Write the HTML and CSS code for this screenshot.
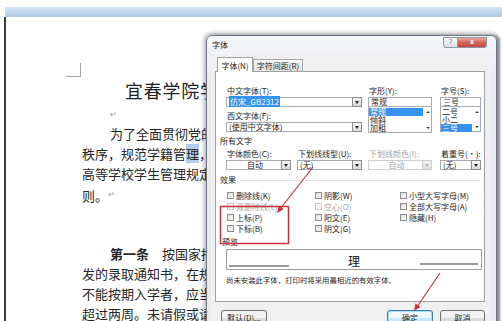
FILE: index.html
```html
<!DOCTYPE html>
<html lang="zh-CN">
<head>
    <meta charset="UTF-8">
    <meta name="viewport" content="width=device-width, initial-scale=1.0">
    <title>字体</title>
    <link rel="stylesheet" href="styles.css">
</head>
<body>

<div class="word">
    <div class="ribbon"></div>
    <div class="page">
        <div class="corner"></div>
        <div class="doc-title">宜春学院学生学籍管理规定</div>
        <div class="line indent"><span class="ret">↵</span></div>
        <div class="line indent">为了全面贯彻党的教育方针，维护正常的教育教学</div>
        <div class="line">秩序，规范学籍管<span class="sel">理</span>，根据教育部《普通</div>
        <div class="line">高等学校学生管理规定》，结合我校实际，制定本细</div>
        <div class="line">则。<span class="ret">↵</span></div>
        <div class="line"></div>
        <div class="line"></div>
        <div class="line indent"><b>第一条</b>　按国家招生规定录取的新生，持学校</div>
        <div class="line">发的录取通知书，在规定期限内到校办理入学手续。</div>
        <div class="line">不能按期入学者，应当向学校请假。请假时间一般不得</div>
        <div class="line">超过两周。未请假或请假逾期者，除因不可抗力等正当</div>
    </div>
</div>

<div class="dialog">
    <div class="titlebar">
        <span class="title">字体</span>
        <div class="caption-btns">
            <span class="cap-help">?</span>
            <span class="cap-close">x</span>
        </div>
    </div>

    <div class="client">
        <div class="tabs">
            <span class="tab active">字体(N)</span>
            <span class="tab">字符间距(R)</span>
        </div>

        <div class="tabpage">
            <div class="font-row">
                <div class="col-a">
                    <div class="lbl">中文字体(T):</div>
                    <div class="combo"><span class="val"><span class="hl">仿宋_GB2312</span></span><span class="drop"></span></div>
                    <div class="lbl gap">西文字体(F):</div>
                    <div class="combo"><span class="val">(使用中文字体)</span><span class="drop"></span></div>
                </div>
                <div class="col-b">
                    <div class="lbl">字形(Y):</div>
                    <div class="edit">常规</div>
                    <div class="listbox">
                        <div class="items">
                            <div class="item on">常规</div>
                            <div class="item">倾斜</div>
                            <div class="item">加粗</div>
                        </div>
                        <div class="sbar"><span class="up"></span><span class="down"></span></div>
                    </div>
                </div>
                <div class="col-c">
                    <div class="lbl">字号(S):</div>
                    <div class="edit">三号</div>
                    <div class="listbox short">
                        <div class="items">
                            <div class="item">二号</div>
                            <div class="item">小二</div>
                            <div class="item on">三号</div>
                        </div>
                        <div class="sbar"><span class="up"></span><span class="down"></span></div>
                    </div>
                </div>
            </div>

            <div class="group">所有文字</div>
            <div class="attr-row">
                <div class="attr">
                    <div class="lbl">字体颜色(C):</div>
                    <div class="combo center"><span class="val">自动</span><span class="drop"></span></div>
                </div>
                <div class="attr">
                    <div class="lbl">下划线线型(U):</div>
                    <div class="combo"><span class="val">(无)</span><span class="drop"></span></div>
                </div>
                <div class="attr c3 disabled">
                    <div class="lbl">下划线颜色(I):</div>
                    <div class="combo center"><span class="val">自动</span><span class="drop"></span></div>
                </div>
                <div class="attr c4">
                    <div class="lbl">着重号(·):</div>
                    <div class="combo"><span class="val">(无)</span><span class="drop"></span></div>
                </div>
            </div>

            <div class="group rule">效果</div>
            <div class="effects">
                <div class="chk"><span class="box"></span>删除线(K)</div>
                <div class="chk disabled"><span class="box"></span>双删除线(L)</div>
                <div class="chk"><span class="box"></span>上标(P)</div>
                <div class="chk"><span class="box"></span>下标(B)</div>
                <div class="chk"><span class="box"></span>阴影(W)</div>
                <div class="chk disabled"><span class="box"></span>空心(O)</div>
                <div class="chk"><span class="box"></span>阳文(E)</div>
                <div class="chk"><span class="box"></span>阴文(G)</div>
                <div class="chk"><span class="box"></span>小型大写字母(M)</div>
                <div class="chk"><span class="box"></span>全部大写字母(A)</div>
                <div class="chk"><span class="box"></span>隐藏(H)</div>
            </div>

            <div class="group preview-lbl">预览</div>
            <div class="preview">理</div>
            <div class="note">尚未安装此字体，打印时将采用最相近的有效字体。</div>
        </div>

        <div class="buttons">
            <span class="btn first">默认(D)...</span>
            <span class="btn ok">确定</span>
            <span class="btn cancel">取消</span>
        </div>
    </div>
</div>

<svg class="notes" width="502" height="321" viewBox="0 0 502 321">
    <rect x="220.5" y="206.5" width="68" height="37" fill="none" stroke="#c9323a" stroke-width="1.5"/>
    <line x1="313" y1="167" x2="280" y2="209" stroke="#c9323a" stroke-width="1.2"/>
    <polygon points="277,213 283.7,209.3 278.9,205.6" fill="#c9323a"/>
    <line x1="440" y1="273" x2="417" y2="307" stroke="#c9323a" stroke-width="1.2"/>
    <polygon points="414,311 420.4,306.9 415.5,303.5" fill="#c9323a"/>
</svg>

</body>
</html>
```

FILE: styles.css
```css
html, body {
    margin: 0;
    padding: 0;
    height: 321px;
    overflow: hidden;
}

body {
    position: relative;
    background-color: #fff;
    font-family: "Noto Sans CJK SC", "Liberation Sans", sans-serif;
    color: #222;
}

/* the word document behind */
.word {
    padding-top: 7px;
}

.ribbon {
    height: 10px;
    margin-left: 5px;
    background: linear-gradient(#d7e5f5, #b0c8e4);
}

.page {
    margin-left: 4px;
    padding-top: 46px;
    border-left: 2px solid #3c3c3c;
}

.corner {
    width: 14px;
    height: 13px;
    margin-left: 60px;
    border-right: 1px solid #a8a8a8;
    border-bottom: 1px solid #a8a8a8;
}

.doc-title {
    padding-left: 119px;
    font-size: 18px;
    line-height: 27px;
    letter-spacing: 0.75px;
    white-space: nowrap;
}

.line {
    height: 20px;
    padding-left: 76px;
    font-size: 13px;
    line-height: 20px;
    white-space: nowrap;
    color: #262626;
}

.line.indent {
    padding-left: 104px;
}

.ret {
    font-size: 8px;
    color: #999;
    vertical-align: 4px;
}

.sel {
    background-color: #b3cdee;
}

/* font dialog */
.dialog {
    position: absolute;
    left: 206px;
    top: 35px;
    width: 291px;
    height: 300px;
    box-sizing: border-box;
    padding: 0 6px 0 4px;
    display: flex;
    flex-direction: column;
    border: 1px solid #6d7886;
    border-radius: 6px 6px 0 0;
    background: linear-gradient(#f6f7fa, #e8ecf1 40px, #e8ecf1);
    box-shadow: 0 0 4px 2px rgba(0, 0, 0, 0.3), 3px 0 2px rgba(0, 0, 0, 0.3);
    font-size: 8px;
    line-height: 10px;
    color: #1e1e1e;
}

.titlebar {
    height: 18px;
    display: flex;
    align-items: flex-start;
}

.title {
    margin: 4px 0 0 1px;
}

.caption-btns {
    display: flex;
    margin: 1px 3px 0 auto;
}

.cap-help,
.cap-close {
    height: 11px;
    box-sizing: border-box;
    border: 1px solid #8b96a4;
    text-align: center;
    font-family: "DejaVu Sans", sans-serif;
    font-size: 7px;
    line-height: 9px;
}

.cap-help {
    width: 15px;
    border-radius: 0 0 0 3px;
    background: linear-gradient(#fafbfc, #dce1e7);
    color: #666;
}

.cap-close {
    width: 29px;
    border-left: none;
    border-radius: 0 0 3px 0;
    background: linear-gradient(#eba89e, #d3645a 50%, #c44a3f);
    color: #fff;
    font-weight: bold;
}

.client {
    flex: 1;
    padding: 3px 5px 0 4px;
    background-color: #f0f0f0;
}

.tabs {
    position: relative;
    display: flex;
    align-items: flex-end;
    height: 14px;
    padding-left: 2px;
}

.tab {
    width: 50px;
    height: 12px;
    box-sizing: border-box;
    border: 1px solid #a3a3a3;
    border-bottom: none;
    background: linear-gradient(#f8f8f8, #e3e3e3);
    text-align: center;
    line-height: 11px;
    white-space: nowrap;
}

.tab.active {
    width: 36px;
    height: 15px;
    margin-bottom: -1px;
    padding-top: 2px;
    background: #fff;
}

.tabpage {
    height: 231px;
    box-sizing: border-box;
    border: 1px solid #a0a0a0;
    background-color: #fff;
}

.font-row {
    display: flex;
    margin-top: 14px;
    padding-left: 10px;
}

.col-a {
    width: 136px;
}

.col-b {
    width: 64px;
    margin-left: 6px;
}

.col-c {
    width: 41px;
    margin-left: 8px;
}

.lbl {
    padding-left: 1px;
    white-space: nowrap;
}

.lbl.gap {
    margin-top: 4px;
}

.combo {
    display: flex;
    height: 10px;
    margin-top: 1px;
    box-sizing: border-box;
    border: 1px solid #a5acb5;
    background-color: #fff;
    line-height: 8px;
}

.combo .val {
    flex: 1;
    padding-left: 2px;
    white-space: nowrap;
}

.combo.center .val {
    text-align: center;
}

.hl {
    padding: 0 1px;
    background-color: #3592f0;
    color: #fff;
}

.drop {
    position: relative;
    width: 10px;
    margin: -1px -1px -1px 0;
    box-sizing: border-box;
    border: 1px solid #8e8e8e;
    background: linear-gradient(#f6f6f6, #dadada);
}

.drop::after {
    content: "";
    position: absolute;
    left: 2px;
    top: 3px;
    border-top: 3px solid #222;
    border-left: 2px solid transparent;
    border-right: 2px solid transparent;
}

.edit {
    height: 10px;
    margin-top: 1px;
    padding-left: 2px;
    box-sizing: border-box;
    border: 1px solid #a5acb5;
    line-height: 8px;
}

.listbox {
    display: flex;
    height: 26px;
    box-sizing: border-box;
    border: 1px solid #a5acb5;
    border-top: none;
    line-height: 8px;
}

.listbox.short {
    height: 25px;
}

.items {
    flex: 1;
    padding-top: 1px;
}

.item {
    padding-left: 1px;
    margin-right: 1px;
}

.item.on {
    background-color: #3592f0;
    color: #fff;
}

.sbar {
    width: 7px;
    display: flex;
    flex-direction: column;
    justify-content: space-between;
    align-items: center;
    padding: 4px 0 3px;
}

.sbar .up {
    border-bottom: 2px solid #444;
    border-left: 2px solid transparent;
    border-right: 2px solid transparent;
}

.sbar .down {
    border-top: 2px solid #444;
    border-left: 2px solid transparent;
    border-right: 2px solid transparent;
}

.group {
    margin-top: 3px;
    padding-left: 4px;
}

.attr-row {
    display: flex;
    margin-top: 3px;
    padding-left: 10px;
}

.attr {
    width: 65px;
}

.attr + .attr {
    margin-left: 6px;
}

.attr.c3 {
    width: 64px;
}

.attr.c4 {
    width: 41px;
    margin-left: 8px;
}

.disabled {
    color: #a6a6a6;
}

.disabled .combo,
.disabled .drop {
    border-color: #cfcfcf;
}

.disabled .drop::after {
    border-top-color: #b5b5b5;
}

.group.rule {
    display: flex;
    align-items: center;
    margin-top: 5px;
}

.group.rule::after {
    content: "";
    flex: 1;
    height: 1px;
    margin: 1px 4px 0;
    background-color: #e4e4e4;
}

.effects {
    display: grid;
    grid-template-columns: 88px 85px auto;
    grid-template-rows: repeat(4, 11px);
    grid-auto-flow: column;
    margin-top: 5px;
    padding-left: 11px;
}

.chk {
    display: flex;
    align-items: center;
    gap: 2px;
    white-space: nowrap;
}

.chk .box {
    width: 7px;
    height: 7px;
    box-sizing: border-box;
    border: 1px solid #8f8f8f;
    background: linear-gradient(135deg, #dcdcdc, #fbfbfb);
}

.chk.disabled .box {
    border-color: #c8c8c8;
    background: #f4f4f4;
}

.preview-lbl {
    padding-left: 6px;
}

.preview {
    position: relative;
    width: 256px;
    height: 21px;
    margin: 2px 0 0 10px;
    box-sizing: border-box;
    border: 1px solid #a0a0a0;
    text-align: center;
    font-size: 12px;
    line-height: 21px;
    color: #111;
}

.preview::before,
.preview::after {
    content: "";
    position: absolute;
    height: 2px;
    background-color: #9a9a9a;
}

.preview::before {
    left: 2px;
    top: 15px;
    width: 60px;
}

.preview::after {
    right: 3px;
    top: 13px;
    width: 58px;
}

.note {
    margin-top: 5px;
    padding-left: 10px;
    font-size: 7.4px;
    white-space: nowrap;
}

.buttons {
    display: flex;
    gap: 7px;
    margin-top: 8px;
    padding-left: 6px;
}

.btn {
    width: 46px;
    height: 15px;
    box-sizing: border-box;
    border: 1px solid #707070;
    border-radius: 3px;
    background: linear-gradient(#f3f3f3 50%, #e0e0e0 50%, #d2d2d2);
    text-align: center;
    line-height: 13px;
    white-space: nowrap;
}

.btn.first {
    margin-right: auto;
}

.btn.ok {
    border-color: #3c7fb1;
    box-shadow: inset 0 0 0 1px #a6dcf7;
    background: linear-gradient(#eef7fd 50%, #cbeafc 50%, #b6e0f7);
}

.btn.cancel {
    width: 45px;
}

.notes {
    position: absolute;
    left: 0;
    top: 0;
    pointer-events: none;
}
```
